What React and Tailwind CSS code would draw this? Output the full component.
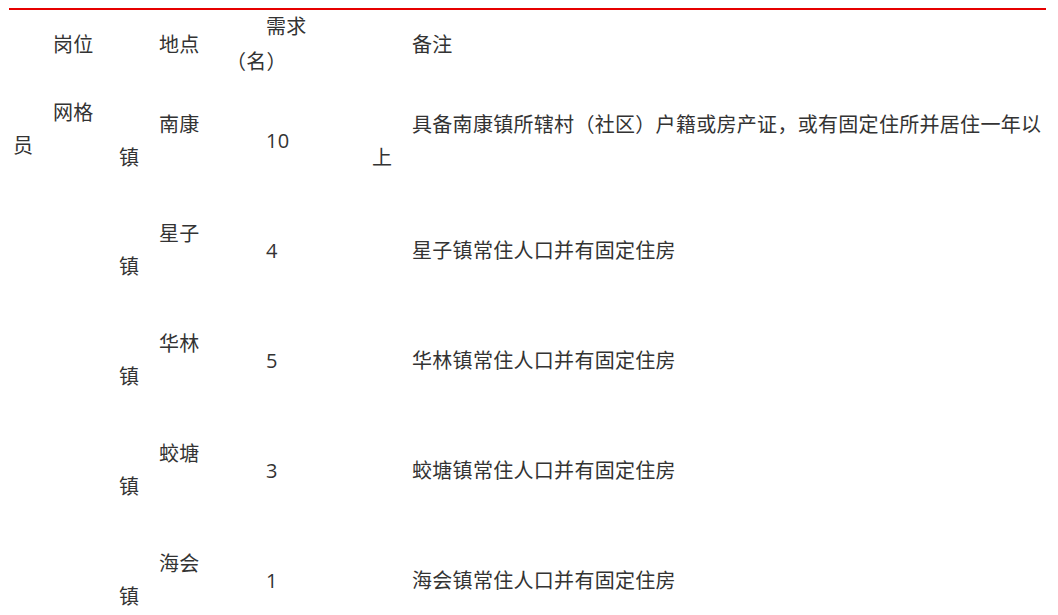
import React from 'react'

const rows = [
    { place: '南康', num: '10', note: ['具备南康镇所辖村（社区）户籍或房产证，或有固定住所并居住一年以', '上'] },
    { place: '星子', num: '4', note: ['星子镇常住人口并有固定住房'] },
    { place: '华林', num: '5', note: ['华林镇常住人口并有固定住房'] },
    { place: '蛟塘', num: '3', note: ['蛟塘镇常住人口并有固定住房'] },
    { place: '海会', num: '1', note: ['海会镇常住人口并有固定住房'] },
]

function Cell({ lines, className = '' }) {
    return (
        <div className={'indent-10 whitespace-nowrap ' + className}>
            {lines.map((l, i) => (
                <React.Fragment key={i}>
                    {i > 0 && <br />}
                    {l}
                </React.Fragment>
            ))}
        </div>
    )
}

function App() {
    return (
        <div
            className="w-[1058px] h-[615px] overflow-hidden bg-white text-[#333333] text-[20px] leading-[33px] tracking-[0.3px]"
            style={{ fontFamily: '"Open Sans", "Noto Sans CJK SC", sans-serif' }}
        >
            <div className="pt-2">
                <div className="ml-[9px] w-[1037px] h-[2px] bg-[#e60000]" />
            </div>

            {/* header */}
            <div className="flex items-center h-[76px] pb-2 pl-[13px]">
                <Cell lines={['岗位']} className="w-[106px]" />
                <Cell lines={['地点']} className="w-[107px]" />
                <Cell lines={['需求', '（名）']} className="w-[146px] leading-[35px]" />
                <Cell lines={['备注']} className="flex-1" />
            </div>

            {rows.map((r, i) => (
                <div key={i} className={'flex items-center pl-[13px] ' + (i === 0 ? 'h-[109px]' : 'h-[110px]')}>
                    {i === 0 ? (
                        <Cell lines={['网格', '员']} className="w-[106px] self-start pt-[10px]" />
                    ) : (
                        <div className="w-[106px]" />
                    )}
                    <Cell lines={[r.place, '镇']} className="w-[107px]" />
                    <Cell lines={[r.num]} className="w-[146px]" />
                    <Cell lines={r.note} className="flex-1" />
                </div>
            ))}
        </div>
    )
}

export default App
